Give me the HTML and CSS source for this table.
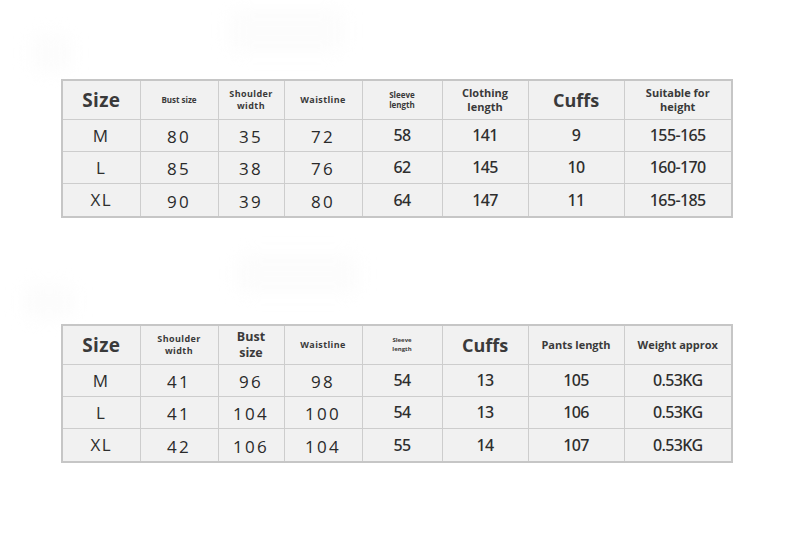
FILE: index.html
```html
<!DOCTYPE html>
<html lang="en">
<head>
<meta charset="utf-8">
<title>Size chart</title>
<link rel="stylesheet" href="styles.css">
</head>
<body>
<div class="page">
  <section class="block block-top">
    <div class="blob blob-a"></div>
    <div class="blob blob-b"></div>
    <table class="chart">
      <colgroup>
        <col class="c1"><col class="c2"><col class="c3"><col class="c4"><col class="c5"><col class="c6"><col class="c7"><col class="c8">
      </colgroup>
      <tr class="head">
        <th class="h-size">Size</th>
        <th class="h-xs">Bust size</th>
        <th class="h-s">Shoulder<br>width</th>
        <th class="h-s">Waistline</th>
        <th class="h-xs">Sleeve<br>length</th>
        <th class="h-m">Clothing<br>length</th>
        <th class="h-cuffs">Cuffs</th>
        <th class="h-m">Suitable for<br>height</th>
      </tr>
      <tr class="r1">
        <td class="sz">M</td><td class="w">80</td><td class="w">35</td><td class="w">72</td><td class="n">58</td><td class="n">141</td><td class="n">9</td><td class="n">155-165</td>
      </tr>
      <tr class="r2">
        <td class="sz">L</td><td class="w">85</td><td class="w">38</td><td class="w">76</td><td class="n">62</td><td class="n">145</td><td class="n">10</td><td class="n">160-170</td>
      </tr>
      <tr class="r3">
        <td class="sz">XL</td><td class="w">90</td><td class="w">39</td><td class="w">80</td><td class="n">64</td><td class="n">147</td><td class="n">11</td><td class="n">165-185</td>
      </tr>
    </table>
  </section>
  <section class="block block-bottom">
    <div class="blob blob-c"></div>
    <div class="blob blob-d"></div>
    <table class="chart">
      <colgroup>
        <col class="c1"><col class="c2"><col class="c3"><col class="c4"><col class="c5"><col class="c6"><col class="c7"><col class="c8">
      </colgroup>
      <tr class="head">
        <th class="h-size">Size</th>
        <th class="h-s">Shoulder<br>width</th>
        <th class="h-l">Bust<br>size</th>
        <th class="h-s">Waistline</th>
        <th class="h-xxs">Sleeve<br>length</th>
        <th class="h-cuffs">Cuffs</th>
        <th class="h-m">Pants length</th>
        <th class="h-m h-low">Weight approx</th>
      </tr>
      <tr class="r1">
        <td class="sz">M</td><td class="w">41</td><td class="w">96</td><td class="w">98</td><td class="n">54</td><td class="n">13</td><td class="n">105</td><td class="n">0.53KG</td>
      </tr>
      <tr class="r2">
        <td class="sz">L</td><td class="w">41</td><td class="w">104</td><td class="w">100</td><td class="n">54</td><td class="n">13</td><td class="n">106</td><td class="n">0.53KG</td>
      </tr>
      <tr class="r3">
        <td class="sz">XL</td><td class="w">42</td><td class="w">106</td><td class="w">104</td><td class="n">55</td><td class="n">14</td><td class="n">107</td><td class="n">0.53KG</td>
      </tr>
    </table>
  </section>
</div>
</body>
</html>
```

FILE: styles.css
```css
* { box-sizing: border-box; }

html, body {
  margin: 0;
  padding: 0;
  background: #ffffff;
}

body {
  width: 800px;
  height: 539px;
  overflow: hidden;
  font-family: "Open Sans", "Noto Sans", sans-serif;
  color: #333333;
}

.page {
  display: flex;
  flex-direction: column;
  padding: 79px 0 0 61px;
  gap: 106px;
}

.block {
  position: relative;
}

.blob {
  position: absolute;
  background: #fcfcfc;
  filter: blur(8px);
  border-radius: 12px;
}
.blob-a { left: 168px; top: -70px; width: 116px; height: 44px; }
.blob-b { left: -30px; top: -46px; width: 40px; height: 40px; }
.blob-c { left: 176px; top: -70px; width: 122px; height: 40px; }
.blob-d { left: -38px; top: -40px; width: 52px; height: 36px; }

.chart {
  position: relative;
  border-collapse: collapse;
  table-layout: fixed;
  width: 670px;
  background: #f1f1f1;
  border: 2px solid #c6c6c6;
}

.c1 { width: 78px; }
.c2 { width: 78px; }
.c3 { width: 66px; }
.c4 { width: 78px; }
.c5 { width: 80px; }
.c6 { width: 86px; }
.c7 { width: 96px; }
.c8 { width: 108px; }

.chart th,
.chart td {
  border: 1px solid #cdcdcd;
  text-align: center;
  vertical-align: middle;
  padding: 0;
  color: #333333;
  white-space: nowrap;
}

.head { height: 39px; }
.r1 { height: 32px; }
.r2 { height: 32px; }
.r3 { height: 34px; }

.chart th {
  font-weight: 700;
  color: #3a3a3a;
}

.h-size {
  font-size: 19px;
  letter-spacing: 0.3px;
  color: #333333;
}
.h-cuffs {
  font-size: 18px;
  color: #333333;
}
.h-xxs { font-size: 6px; line-height: 8.5px; }
.h-xs { font-size: 8px; line-height: 10px; }
.h-s { font-size: 9px; line-height: 12px; letter-spacing: 0.4px; }
.h-m { font-size: 11px; line-height: 14px; }
.h-l { font-size: 12.5px; line-height: 16px; }
.h-low { padding-top: 4px; }

.chart .sz {
  font-size: 17px;
  letter-spacing: 1.5px;
  font-weight: 500;
  color: #2e2e2e;
}

.chart .w {
  font-size: 17px;
  letter-spacing: 2.2px;
  padding-top: 3px;
  font-weight: 500;
  color: #2a2a2a;
}

.chart .n {
  font-family: "Noto Sans", "Open Sans", sans-serif;
  font-size: 16px;
  letter-spacing: -0.6px;
  font-weight: 500;
  color: #2e2e2e;
}
```
